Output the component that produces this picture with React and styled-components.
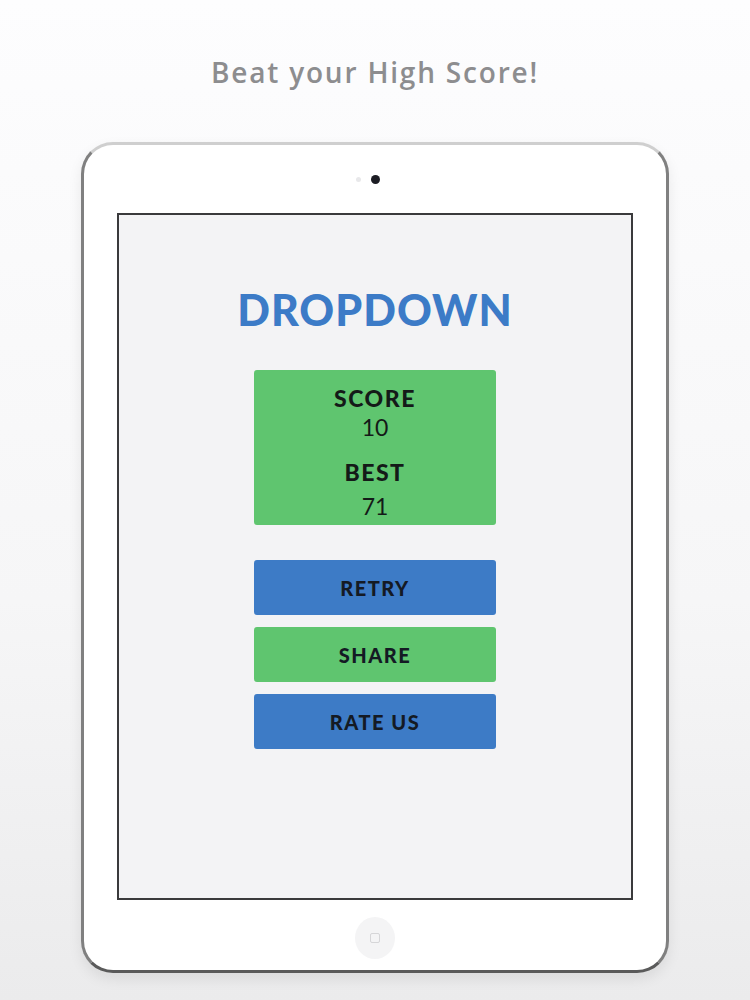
import React from 'react';
import styled, { createGlobalStyle } from 'styled-components';

const GlobalStyle = createGlobalStyle`
  html, body {
    margin: 0;
    padding: 0;
  }
  body {
    font-family: Lato, "Open Sans", sans-serif;
    background: linear-gradient(180deg, #fdfdfe 0%, #f6f6f7 60%, #ebebec 100%);
  }
`;

const Page = styled.div`
  width: 750px;
  height: 1000px;
  display: flex;
  flex-direction: column;
  align-items: center;
  overflow: hidden;
`;

const Tagline = styled.h1`
  margin: 52px 0 0;
  height: 40px;
  font-family: "Open Sans", Lato, sans-serif;
  font-size: 28px;
  font-weight: 600;
  color: #8d8d8f;
  letter-spacing: 1.8px;
  line-height: 40px;
`;

const Device = styled.div`
  margin-top: 50px;
  width: 588px;
  height: 831px;
  box-sizing: border-box;
  background: #fff;
  border: 3px solid #9c9c9c;
  border-color: #cfcfcf #808080 #5a5a5a #808080;
  border-radius: 32px;
  box-shadow: 0 6px 14px rgba(0, 0, 0, 0.08);
  display: flex;
  flex-direction: column;
  align-items: center;
  padding: 0 33px;
`;

const TopBezel = styled.div`
  height: 68px;
  display: flex;
  align-items: center;
  justify-content: center;
  gap: 10px;
  padding-right: 15px;
`;

const Sensor = styled.span`
  width: ${p => p.$size}px;
  height: ${p => p.$size}px;
  border-radius: 50%;
  background: ${p => p.$color};
`;

const Screen = styled.div`
  width: 100%;
  height: 687px;
  box-sizing: border-box;
  border: 2px solid #3a3a3c;
  background: #f3f3f5;
  display: flex;
  flex-direction: column;
  align-items: center;
  padding-top: 70px;
`;

const GameTitle = styled.h2`
  margin: 0;
  font-size: 43px;
  font-weight: 900;
  color: #3c7bc7;
  letter-spacing: 1px;
  line-height: 50px;
`;

const ScoreCard = styled.div`
  margin-top: 35px;
  width: 242px;
  height: 155px;
  box-sizing: border-box;
  background: #5fc56f;
  border-radius: 3px;
  display: flex;
  flex-direction: column;
  align-items: center;
  padding-top: 14px;
  color: #141a18;
`;

const StatLabel = styled.div`
  font-size: 23px;
  font-weight: 900;
  line-height: 28px;
  letter-spacing: 1.5px;
  margin-top: ${p => p.$gap || 0}px;
`;

const StatValue = styled.div`
  font-size: 23px;
  font-weight: 400;
  line-height: 30px;
  margin-top: ${p => p.$gap || 0}px;
`;

const Buttons = styled.div`
  margin-top: 35px;
  display: flex;
  flex-direction: column;
  gap: 12px;
`;

const ActionButton = styled.button`
  width: 242px;
  height: 55px;
  border: none;
  border-radius: 3px;
  background: ${p => (p.$green ? '#5fc56f' : '#3d7bc6')};
  color: #141a24;
  font-family: Lato, "Open Sans", sans-serif;
  font-size: 20px;
  font-weight: 900;
  letter-spacing: 1.5px;
  cursor: pointer;
`;

const BottomBezel = styled.div`
  flex: 1;
  display: flex;
  align-items: center;
  justify-content: center;
  padding-top: 6px;
`;

const HomeButton = styled.div`
  width: 40px;
  height: 42px;
  border-radius: 50%;
  background: #f4f4f5;
  display: flex;
  align-items: center;
  justify-content: center;
`;

const HomeSquare = styled.span`
  width: 8px;
  height: 8px;
  border: 1px solid #d6d6d8;
  border-radius: 2px;
`;

export default function App() {
  return (
    <>
      <GlobalStyle />
      <Page>
        <Tagline>Beat your High Score!</Tagline>
        <Device>
          <TopBezel>
            <Sensor $size={5} $color="#e8e8ea" />
            <Sensor $size={9} $color="#1c1d24" />
          </TopBezel>
          <Screen>
            <GameTitle>DROPDOWN</GameTitle>
            <ScoreCard>
              <StatLabel>SCORE</StatLabel>
              <StatValue>10</StatValue>
              <StatLabel $gap={16}>BEST</StatLabel>
              <StatValue $gap={5}>71</StatValue>
            </ScoreCard>
            <Buttons>
              <ActionButton>RETRY</ActionButton>
              <ActionButton $green>SHARE</ActionButton>
              <ActionButton>RATE US</ActionButton>
            </Buttons>
          </Screen>
          <BottomBezel>
            <HomeButton>
              <HomeSquare />
            </HomeButton>
          </BottomBezel>
        </Device>
      </Page>
    </>
  );
}
